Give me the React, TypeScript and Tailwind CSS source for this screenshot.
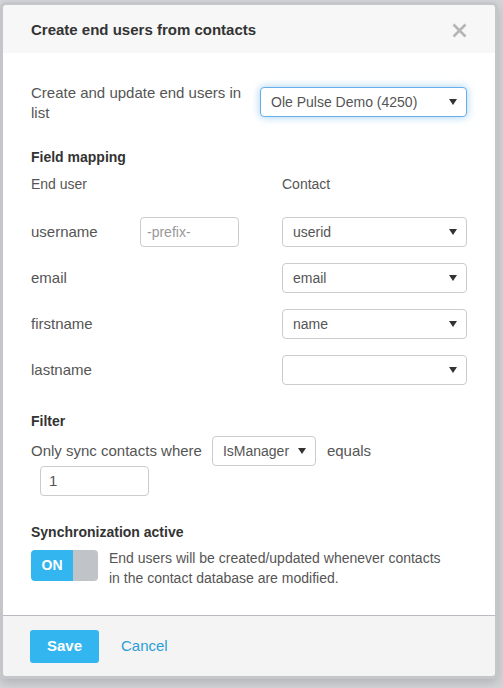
import React from 'react';

const font = { fontFamily: '"Liberation Sans", Arial, sans-serif' };

const Caret = () => (
  <svg width="8" height="6" viewBox="0 0 8 6" className="absolute right-[9px] top-1/2 -translate-y-1/2">
    <path d="M0 0h8L4 6z" fill="#333" />
  </svg>
);

const Select = ({ value, className = '', focused = false }: { value: string; className?: string; focused?: boolean }) => (
  <div
    className={`relative h-[30px] shrink-0 rounded-[4px] border bg-white pl-[10px] flex items-center text-[14px] text-[#555] ${
      focused ? 'border-[#66afe9] shadow-[0_0_8px_rgba(102,175,233,0.6)]' : 'border-[#ccc]'
    } ${className}`}
  >
    {value}
    <Caret />
  </div>
);

const App = () => {
  const rows = [
    { label: 'username', value: 'userid', prefix: true },
    { label: 'email', value: 'email', prefix: false },
    { label: 'firstname', value: 'name', prefix: false },
    { label: 'lastname', value: '', prefix: false },
  ];

  return (
    <div className="w-full h-[688px] bg-[#d3d4d8] pt-[2px] overflow-hidden" style={font}>
      <div className="w-[498px] border-[3px] border-[#c5c6ca] rounded-[6px] overflow-hidden shadow-[0_4px_10px_rgba(0,0,0,0.15)]">
        {/* Header */}
        <div className="h-[48px] bg-[#f7f7f7] pl-[28px] pr-[28px] pt-[2px] flex items-center justify-between">
          <h2 className="text-[15px] font-bold text-[#333]">Create end users from contacts</h2>
          <svg width="15" height="15" viewBox="0 0 15 15">
            <path d="M1.5 1.5l12 12M13.5 1.5l-12 12" stroke="#b5b5b5" strokeWidth="2.6" />
          </svg>
        </div>

        {/* Body */}
        <div className="bg-white px-[28px] pt-[30px] h-[562px] text-[14px] text-[#555]">
          <div className="flex items-start">
            <div className="w-[229px] text-[15px] leading-[20px]">Create and update end users in list</div>
            <Select value="Ole Pulse Demo (4250)" className="w-[207px] mt-[4px]" focused />
          </div>

          <h3 className="mt-[24px] font-bold text-[#333] leading-[20px]">Field mapping</h3>
          <div className="mt-[7px] flex leading-[20px]">
            <div className="w-[251px]">End user</div>
            <div>Contact</div>
          </div>

          <div className="mt-[23px] flex flex-col gap-[16px]">
            {rows.map((r) => (
              <div key={r.label} className="flex items-center h-[30px]">
                <div className="w-[109px] text-[15px]">{r.label}</div>
                <div className="w-[142px]">
                  {r.prefix && (
                    <div className="w-[99px] h-[30px] rounded-[4px] border border-[#ccc] pl-[6px] flex items-center text-[#999]">
                      -prefix-
                    </div>
                  )}
                </div>
                <Select value={r.value} className="w-[185px]" />
              </div>
            ))}
          </div>

          <h3 className="mt-[26px] font-bold text-[#333] leading-[20px]">Filter</h3>
          <div className="mt-[5px] flex items-center h-[30px] text-[15px]">
            <span>Only sync contacts where</span>
            <Select value="IsManager" className="w-[104px] ml-[10px]" />
            <span className="ml-[11px]">equals</span>
          </div>
          <div className="ml-[9px] w-[109px] h-[30px] rounded-[4px] border border-[#ccc] pl-[8px] flex items-center text-[15px]">1</div>

          <h3 className="mt-[26px] font-bold text-[#333] leading-[20px]">Synchronization active</h3>
          <div className="mt-[6px] flex items-start">
            <div className="mt-[2px] w-[67px] h-[31px] rounded-[4px] overflow-hidden flex shrink-0">
              <div className="w-[42px] bg-[#33b5ef] text-white font-bold flex items-center justify-center">ON</div>
              <div className="flex-1 bg-[#c0c3c7]" />
            </div>
            <p className="ml-[11px] w-[342px] leading-[20px]">
              End users will be created/updated whenever contacts in the contact database are modified.
            </p>
          </div>
        </div>

        {/* Footer */}
        <div className="h-[61px] bg-[#f4f4f4] border-t border-[#b9bdc1] pl-[27px] flex items-center">
          <button className="w-[69px] h-[33px] rounded-[3px] bg-[#33b5ef] text-white font-bold text-[15px]">Save</button>
          <a className="ml-[22px] text-[15px] text-[#2a9fd6]">Cancel</a>
        </div>
      </div>
    </div>
  );
};

export default App;
